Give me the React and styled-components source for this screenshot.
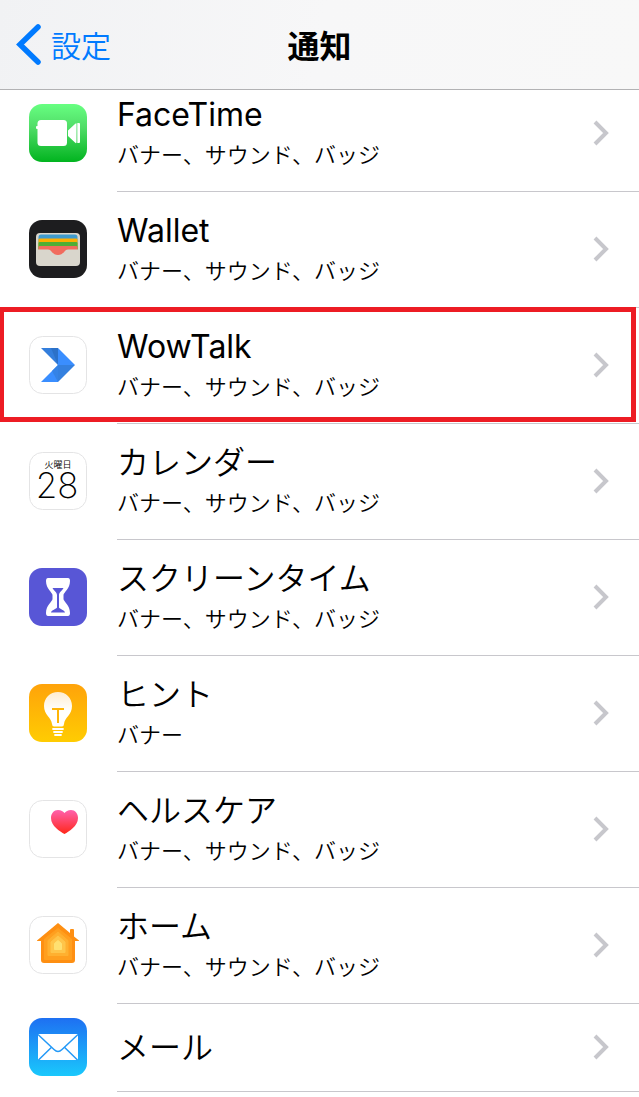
import React from "react";
import styled, { createGlobalStyle } from "styled-components";

const ALL = "バナー、サウンド、バッジ";

const FaceTimeIcon = () => (
  <>
    <defs>
      <linearGradient id="facetime" x1="0" y1="0" x2="0" y2="1">
        <stop offset="0" stopColor="#67ff81" />
        <stop offset="0.4" stopColor="#51dd68" />
        <stop offset="1" stopColor="#01b41f" />
      </linearGradient>
    </defs>
    <rect width="58" height="58" rx="13" fill="url(#facetime)" />
    <rect x="8.5" y="16" width="29.5" height="26" rx="3.5" fill="#fff" />
    <rect x="7" y="22" width="3" height="3" rx="1" fill="#fff" />
    <path d="M39 26.5 L46 20 Q47.5 18.5 47.5 20 V38 Q47.5 40 46 38.5 L39 32 Z" fill="#fff" />
    <path d="M48.3 19 H50 Q51 19 51 20 V38 Q51 39 50 39 H48.3 Z" fill="#fff" />
  </>
);

const WalletIcon = () => (
  <>
    <rect width="58" height="58" rx="13" fill="#1d1d1f" />
    <rect x="7" y="13" width="44" height="33" rx="4" fill="#d9d6cc" />
    <path d="M9.5 30 V17 Q9.5 14.5 12 14.5 H46 Q48.5 14.5 48.5 17 V30 Z" fill="#3f9bcd" />
    <path d="M9.5 30 V19.5 Q9.5 18.5 11 18.5 H47 Q48.5 18.5 48.5 19.5 V30 Z" fill="#fdae02" />
    <path d="M9.5 30 V23 Q9.5 22 11 22 H47 Q48.5 22 48.5 23 V30 Z" fill="#4fae35" />
    <path d="M9.5 30 V27 Q9.5 26 11 26 H47 Q48.5 26 48.5 27 V30 Z" fill="#f16c5e" />
    <path d="M9 29.5 H49 V32 H9 Z" fill="#d9d6cc" />
    <path d="M19 29 H39 C35.5 30 34.5 35 29 35 C23.5 35 22.5 30 19 29 Z" fill="#f16c5e" />
  </>
);

const WowTalkIcon = () => (
  <>
    <path d="M12 12 H29 V29 Z" fill="#337edc" />
    <path d="M22 12 H29 V29 Z" fill="#2c71c8" />
    <path d="M29 12 L46 29 H29 Z" fill="#3a8eff" />
    <path d="M29 29 H46 L29 46 Z" fill="#3480df" />
    <path d="M29 29 V46 H12 Z" fill="#3a8eff" />
    <path d="M29 29 V46 L23 35 Z" fill="#3583e6" />
  </>
);

const CalendarIcon = () => (
  <>
    <CalendarText x="29" y="16" size="9" weight="350">
      火曜日
    </CalendarText>
    <CalendarText x="28" y="46" size="35" weight="200">
      28
    </CalendarText>
  </>
);

const ScreenTimeIcon = () => (
  <>
    <rect width="58" height="58" rx="13" fill="#5856d6" />
    <path
      d="M19 10 H39 Q41 10 41 13 C41 21 34.5 24.5 34.5 27 V31 C34.5 33.5 41 37 41 45 Q41 48 39 48 H19 Q17 48 17 45 C17 37 23.5 33.5 23.5 31 V27 C23.5 24.5 17 21 17 13 Q17 10 19 10 Z"
      fill="#fff"
    />
    <path
      d="M23.5 20 H34.5 C33 23 30.2 24 30 27 V39.5 C30.2 41 36 42 36 44.5 H22 C22 42 27.8 41 28 39.5 V27 C27.8 24 25 23 23.5 20 Z"
      fill="#5856d6"
    />
  </>
);

const TipsIcon = () => (
  <>
    <defs>
      <linearGradient id="tips" x1="0" y1="0" x2="0" y2="1">
        <stop offset="0" stopColor="#ffa30a" />
        <stop offset="1" stopColor="#ffcc02" />
      </linearGradient>
      <linearGradient id="bulb" x1="0" y1="0" x2="0" y2="1">
        <stop offset="0" stopColor="#ffedcf" />
        <stop offset="0.55" stopColor="#fff" />
      </linearGradient>
    </defs>
    <rect width="58" height="58" rx="13" fill="url(#tips)" />
    <path
      d="M29 8 C37 8 43 14 43 22 C43 31 35.5 33.5 35 40 Q34.8 42.5 33 42.5 H25 Q23.2 42.5 23 40 C22.5 33.5 15 31 15 22 C15 14 21 8 29 8 Z"
      fill="url(#bulb)"
    />
    <path d="M23 25 H35 M29 25 V39" stroke="#ffb507" strokeWidth="2" fill="none" />
    <path d="M24 45 H34 M25 48 H33 M26 51 H32" stroke="#fff" strokeWidth="1.8" strokeLinecap="round" />
  </>
);

const HealthIcon = () => (
  <>
    <defs>
      <linearGradient id="heart" x1="0" y1="0" x2="0" y2="1">
        <stop offset="0" stopColor="#ff61ad" />
        <stop offset="1" stopColor="#ff2719" />
      </linearGradient>
    </defs>
    <path
      d="M35.5 34 C31 31.5 22 26 22 18 C22 13.5 25 10 29 10 C32 10 34.5 11.5 35.5 13 C36.5 11.5 39 10 42 10 C46 10 49 13.5 49 18 C49 26 40 31.5 35.5 34 Z"
      fill="url(#heart)"
    />
  </>
);

const HomeIcon = () => (
  <>
    <path
      d="M29 7 L41 17 V14 Q41 13 42 13 H44 Q45 13 45 14 V20.5 L50 24.5 V25 H46 V44 Q46 47 43 47 H15 Q12 47 12 44 V25 H8 V24.5 Z"
      fill="#fe8f12"
    />
    <path d="M29 12.5 L42.5 23 V43.5 H15.5 V23 Z" fill="#ff9f1f" stroke="#ff9f1f" strokeLinejoin="round" />
    <path d="M29 16 L39 24.5 V39.5 H19 V24.5 Z" fill="#ffb030" stroke="#ffb030" strokeLinejoin="round" />
    <path d="M29 20 L36 26 V36.5 H22 V26 Z" fill="#ffc54a" stroke="#ffc54a" strokeLinejoin="round" />
    <path d="M29 24.5 L32.5 27.5 V33.5 H25.5 V27.5 Z" fill="#ffe071" stroke="#ffe071" strokeLinejoin="round" />
  </>
);

const MailIcon = () => (
  <>
    <defs>
      <linearGradient id="mail" x1="0" y1="0" x2="0" y2="1">
        <stop offset="0" stopColor="#1e70f2" />
        <stop offset="1" stopColor="#1ac8fc" />
      </linearGradient>
    </defs>
    <rect width="58" height="58" rx="13" fill="url(#mail)" />
    <rect x="9" y="16" width="40" height="26" rx="1" fill="#fff" />
    <path
      d="M9 16.5 L25 31.5 Q29 35.5 33 31.5 L49 16.5 M9.5 42 L22.3 29.5 M48.5 42 L35.7 29.5"
      stroke="#2399f7"
      strokeWidth="1.5"
      fill="none"
    />
  </>
);

const apps = [
  { name: "FaceTime", latin: true, detail: ALL, Icon: FaceTimeIcon },
  { name: "Wallet", latin: true, detail: ALL, Icon: WalletIcon },
  { name: "WowTalk", latin: true, detail: ALL, Icon: WowTalkIcon, outlined: true, marked: true },
  { name: "カレンダー", detail: ALL, Icon: CalendarIcon, outlined: true },
  { name: "スクリーンタイム", detail: ALL, Icon: ScreenTimeIcon },
  { name: "ヒント", detail: "バナー", Icon: TipsIcon },
  { name: "ヘルスケア", detail: ALL, Icon: HealthIcon, outlined: true },
  { name: "ホーム", detail: ALL, Icon: HomeIcon, outlined: true },
  { name: "メール", Icon: MailIcon },
];

const App = () => {
  return (
    <>
      <GlobalStyle />
      <Header>
        <BackLink href="#settings">
          <BackArrow viewBox="0 0 26 44">
            <path d="M22 5 L4 22.5 L22 40" />
          </BackArrow>
          設定
        </BackLink>
        <Title>通知</Title>
      </Header>
      <AppList>
        {apps.map(({ name, latin, detail, Icon, outlined, marked }) => (
          <AppItem key={name} $marked={marked}>
            <AppLink href={`#${name}`}>
              <AppIcon viewBox="0 0 58 58" aria-hidden="true">
                <Icon />
                {outlined && (
                  <rect x="0.5" y="0.5" width="57" height="57" rx="13" fill="none" stroke="#e4e4e5" />
                )}
              </AppIcon>
              <AppBody $single={!detail}>
                <Texts>
                  <AppName $latin={latin}>{name}</AppName>
                  {detail && <Detail>{detail}</Detail>}
                </Texts>
                <Chevron viewBox="0 0 16 26" aria-hidden="true">
                  <path d="M2 2 L13 13 L2 24" />
                </Chevron>
              </AppBody>
            </AppLink>
          </AppItem>
        ))}
      </AppList>
    </>
  );
};

const GlobalStyle = createGlobalStyle`
  * {
    box-sizing: border-box;
  }

  body {
    margin: 0;
    background: #fff;
    color: #000;
    font-family: Inter, "Noto Sans CJK JP", sans-serif;
  }
`;

const Header = styled.header`
  position: sticky;
  top: 0;
  z-index: 2;
  display: grid;
  grid-template-columns: 1fr auto 1fr;
  align-items: center;
  height: 90px;
  padding: 0 16px 1px;
  border-bottom: 1px solid #b2b2b4;
  background: linear-gradient(100deg, #f1f2f4, #f7f7f8 50%, #f8f8f8);
`;

const BackLink = styled.a`
  display: flex;
  align-items: center;
  gap: 9px;
  color: #007aff;
  font-size: 30px;
  font-weight: 350;
  text-decoration: none;
`;

const BackArrow = styled.svg`
  width: 26px;
  height: 44px;
  fill: none;
  stroke: currentColor;
  stroke-width: 5.5;
  stroke-linecap: round;
`;

const Title = styled.h1`
  margin: 0;
  font-size: 32px;
  font-weight: 700;
`;

/* the list is scrolled slightly under the header */
const AppList = styled.ul`
  margin: -14px 0 0;
  padding: 0;
  list-style: none;
`;

const AppItem = styled.li`
  position: relative;

  &::after {
    content: "";
    display: ${(props) => (props.$marked ? "block" : "none")};
    position: absolute;
    top: -1px;
    right: 3px;
    bottom: 2px;
    left: -1px;
    border: 5px solid #ed1c24;
    pointer-events: none;
  }
`;

const AppLink = styled.a`
  display: flex;
  align-items: center;
  gap: 30px;
  padding-left: 29px;
  color: inherit;
  text-decoration: none;
`;

const AppIcon = styled.svg`
  flex: none;
  width: 58px;
  height: 58px;
  margin-bottom: 2px;
`;

const AppBody = styled.div`
  flex: 1;
  display: flex;
  align-items: center;
  justify-content: space-between;
  min-height: ${(props) => (props.$single ? "88px" : "116px")};
  padding: 0 30px 1px 0;
  border-bottom: 1px solid #c8c7cc;
`;

const Texts = styled.div`
  display: flex;
  flex-direction: column;
  padding-top: 2px;
`;

const AppName = styled.span`
  font-size: 32px;
  font-weight: ${(props) => (props.$latin ? 400 : 350)};
  line-height: 42px;
`;

const Detail = styled.span`
  font-size: 22px;
  font-weight: 350;
  line-height: 38px;
`;

const Chevron = styled.svg`
  flex: none;
  width: 16px;
  height: 26px;
  fill: none;
  stroke: #c7c7cc;
  stroke-width: 4;
`;

const CalendarText = styled.text`
  font-size: ${(props) => props.size}px;
  font-weight: ${(props) => props.weight};
  text-anchor: middle;
`;

export default App;
